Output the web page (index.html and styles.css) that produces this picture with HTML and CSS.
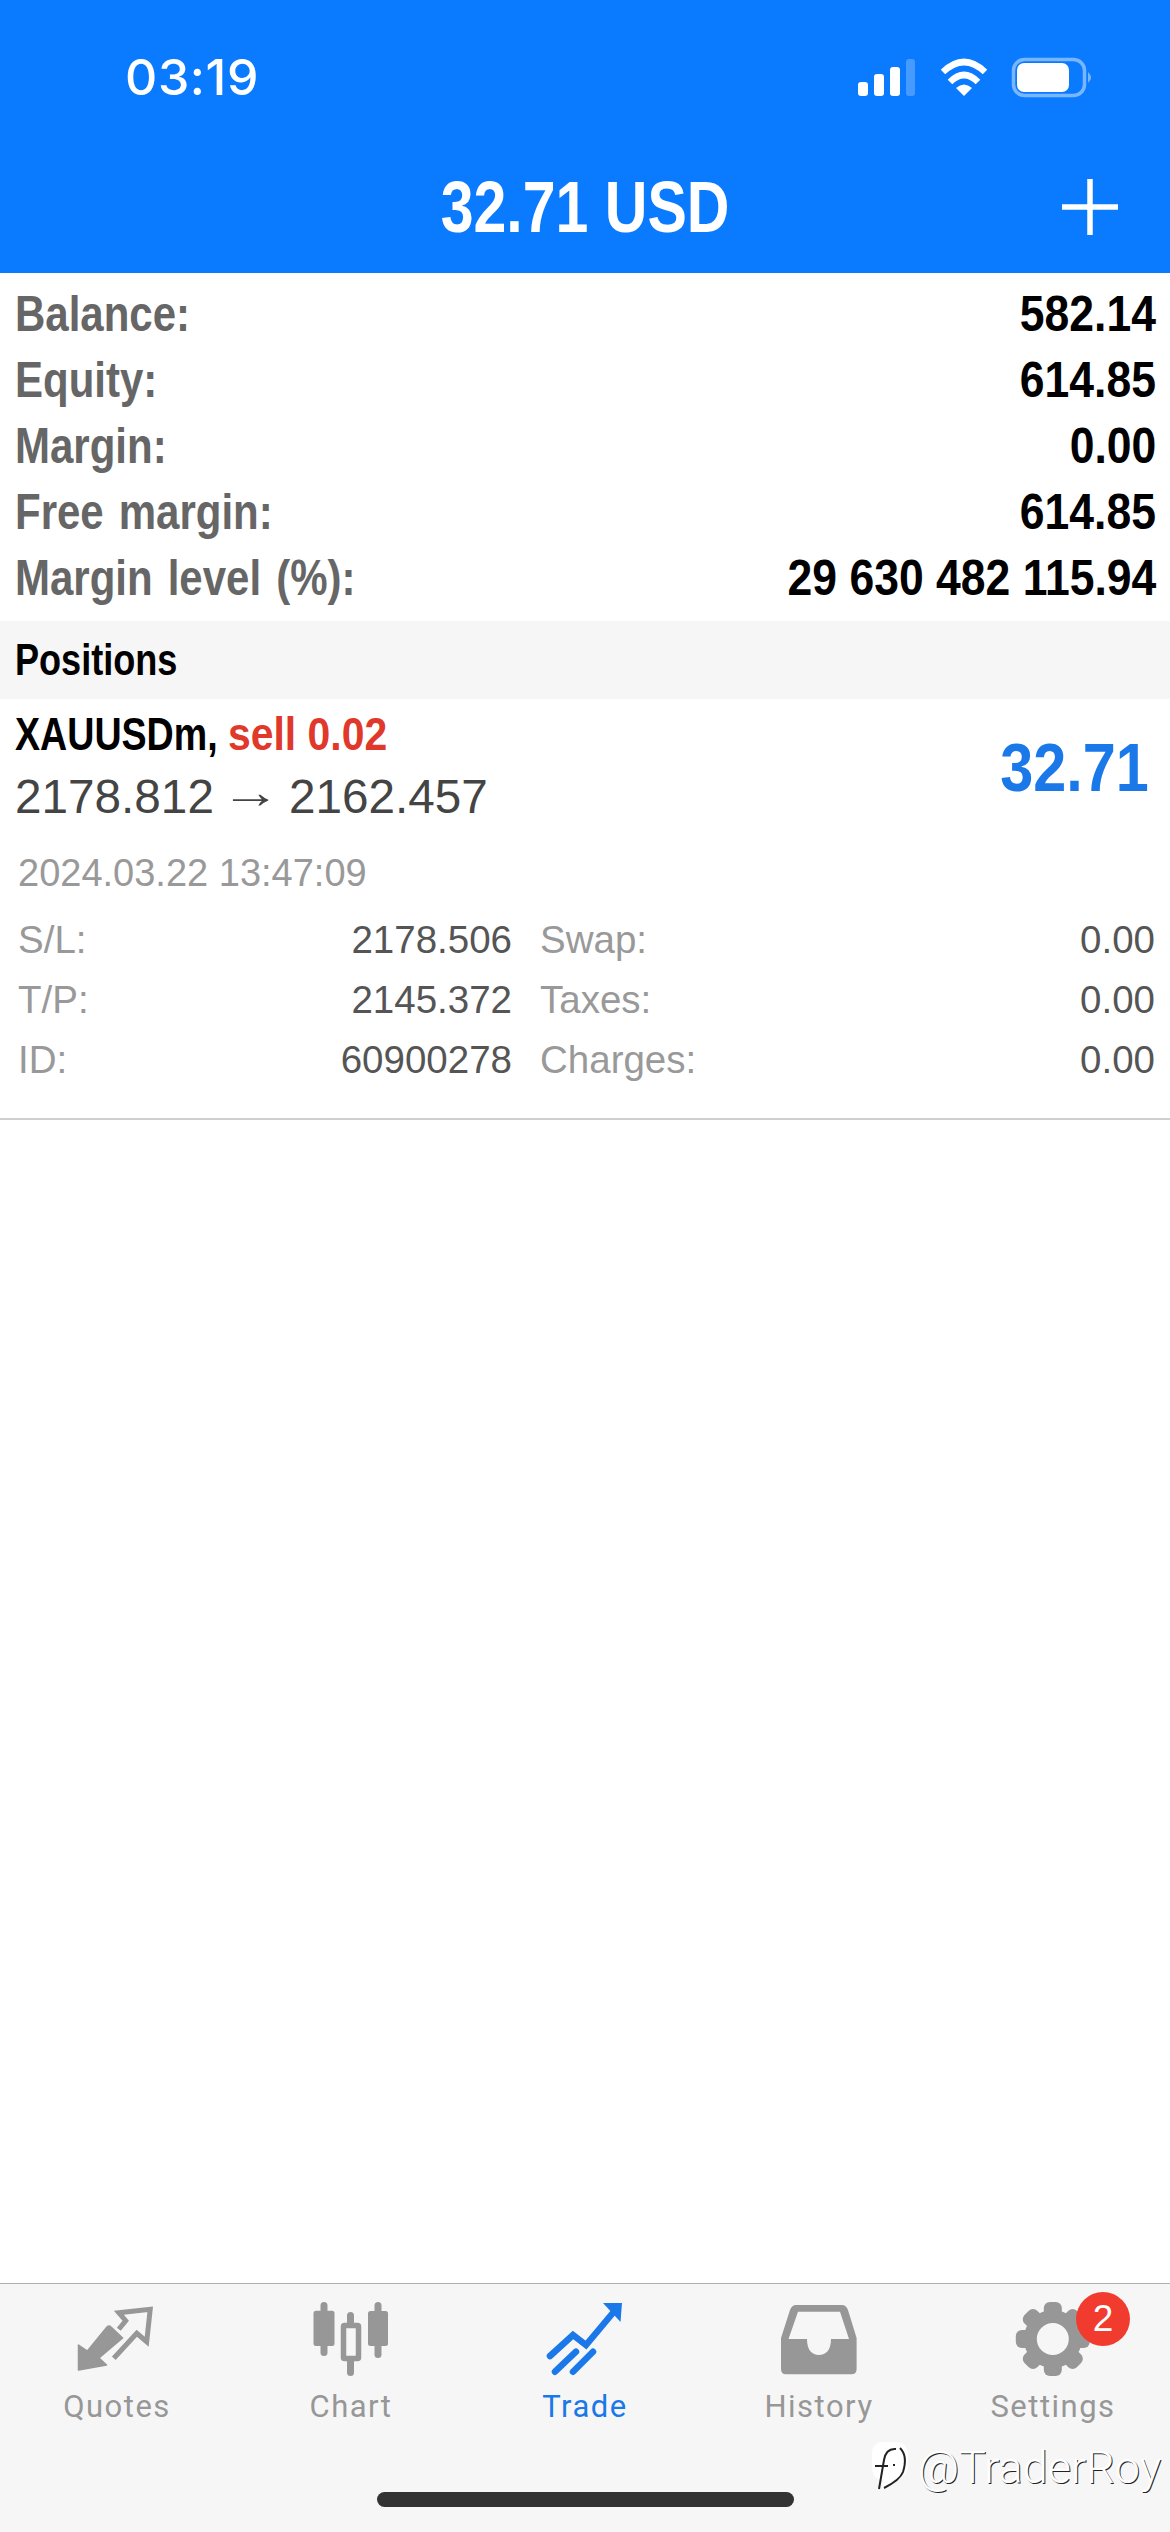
FILE: index.html
```html
<!DOCTYPE html>
<html lang="en">
<head>
<meta charset="utf-8">
<title>Trade</title>
<link rel="stylesheet" href="styles.css">
</head>
<body>
<header class="header">
  <div class="status">
    <span class="time">03:19</span>
    <svg class="status-icons" viewBox="850 50 250 56" aria-hidden="true">
      <rect x="856" y="82" width="10" height="14" rx="3" fill="#fff"/>
      <rect x="872" y="74" width="10" height="22" rx="3" fill="#fff"/>
      <rect x="888" y="67" width="10" height="29" rx="3" fill="#fff"/>
      <rect x="904" y="59" width="9" height="37" rx="3" fill="#fff" opacity=".25"/>
      <g fill="none" stroke="#fff" stroke-width="6.500">
        <path d="M941 72 Q962 52 983 72"/>
        <path d="M948 82 Q962 68 976 82"/>
      </g>
      <path d="M954 88 Q962 81 970 88 L962 96Z" fill="#fff"/>
      <rect x="1011.500" y="59.500" width="71" height="36" rx="11" fill="none" stroke="#fff" stroke-opacity=".45" stroke-width="3.500"/>
      <rect x="1015" y="63" width="52" height="29" rx="7" fill="#fff"/>
      <path d="M1086 72 Q1092 77.500 1086 83Z" fill="#fff" opacity=".45"/>
    </svg>
  </div>
  <div class="title-row">
    <h1 class="title"><span class="fit-title">32.71 USD</span></h1>
    <svg class="plus" viewBox="0 0 56 56" aria-hidden="true">
      <path d="M28 0V56M0 28H56" stroke="#fff" stroke-width="5.500" fill="none"/>
    </svg>
  </div>
</header>

<main class="main">
  <section class="summary">
    <div class="summary-row"><span class="fit-label">Balance:</span><span class="fit-value">582.14</span></div>
    <div class="summary-row"><span class="fit-label">Equity:</span><span class="fit-value">614.85</span></div>
    <div class="summary-row"><span class="fit-label">Margin:</span><span class="fit-value">0.00</span></div>
    <div class="summary-row"><span class="fit-label">Free margin:</span><span class="fit-value">614.85</span></div>
    <div class="summary-row"><span class="fit-label">Margin level (%):</span><span class="fit-value">29 630 482 115.94</span></div>
  </section>

  <h2 class="section-head"><span class="fit-head">Positions</span></h2>

  <article class="position">
    <div class="position-top">
      <div>
        <div class="symbol"><span class="fit-symbol">XAUUSDm,</span><span class="fit-side">sell 0.02</span></div>
        <div class="prices"><span>2178.812</span> <span class="arrow">→</span> <span>2162.457</span></div>
      </div>
      <div class="profit"><span class="fit-profit">32.71</span></div>
    </div>
    <div class="date">2024.03.22 13:47:09</div>
    <div class="details">
      <div class="pair"><span class="key">S/L:</span><span class="val">2178.506</span></div>
      <div class="pair"><span class="key">Swap:</span><span class="val">0.00</span></div>
      <div class="pair"><span class="key">T/P:</span><span class="val">2145.372</span></div>
      <div class="pair"><span class="key">Taxes:</span><span class="val">0.00</span></div>
      <div class="pair"><span class="key">ID:</span><span class="val">60900278</span></div>
      <div class="pair"><span class="key">Charges:</span><span class="val">0.00</span></div>
    </div>
  </article>
</main>

<footer class="tabbar">
  <nav class="tabs">
    <div class="tab">
      <svg class="tab-icon" viewBox="72 2298 90 80" aria-hidden="true">
        <path d="M78.500 2370V2345L87.400 2351 107 2327Q109 2325 111 2327L122.600 2338 99 2358 106.500 2365Z" fill="#979797" stroke="#979797" stroke-width="1.500" stroke-linejoin="round"/>
        <path d="M118.800 2329.300 125.700 2320.700 118.800 2312.700 150.200 2309.300 146.700 2341.700 136.800 2333.300 113.800 2358.300" fill="none" stroke="#979797" stroke-width="5"/>
      </svg>
      <span class="tab-label">Quotes</span>
    </div>
    <div class="tab">
      <svg class="tab-icon" viewBox="306 2298 90 80" aria-hidden="true">
        <g fill="#979797">
          <rect x="313.500" y="2310.700" width="21" height="35.300" rx="2.500"/>
          <rect x="320.500" y="2302" width="7" height="54" rx="3.500"/>
          <rect x="368" y="2311" width="20" height="35" rx="2.500"/>
          <rect x="374.500" y="2302" width="7" height="56" rx="3.500"/>
          <rect x="347" y="2312" width="7" height="64" rx="3.500"/>
        </g>
        <rect x="343.500" y="2325.500" width="15" height="33" rx="1" fill="#f6f6f6" stroke="#979797" stroke-width="5.500"/>
      </svg>
      <span class="tab-label">Chart</span>
    </div>
    <div class="tab tab-active">
      <svg class="tab-icon" viewBox="540 2298 90 80" aria-hidden="true">
        <g fill="none" stroke="#1a78e8" stroke-width="6.500" stroke-linecap="round">
          <path d="M550 2356 573 2335 586 2345 617 2308"/>
          <path d="M555 2371.700 576 2351.700"/>
          <path d="M573 2371.700 593 2351.700"/>
        </g>
        <path d="M603 2303H622L620.500 2322Z" fill="#1a78e8"/>
      </svg>
      <span class="tab-label">Trade</span>
    </div>
    <div class="tab">
      <svg class="tab-icon" viewBox="774 2298 90 80" aria-hidden="true">
        <path fill="#979797" fill-rule="evenodd" d="M796 2305H842Q846 2305 848 2310L856.600 2338V2369Q856.600 2374.300 851.600 2374.300H786Q781 2374.300 781 2369V2338L790 2310Q792 2305 796 2305ZM798 2311.700 788.500 2339H807C807 2350 812 2355 819 2355 826 2355 831 2350 831 2339H849L840 2311.700Z"/>
      </svg>
      <span class="tab-label">History</span>
    </div>
    <div class="tab">
      <svg class="tab-icon" viewBox="1008 2298 90 80" aria-hidden="true">
        <g transform="translate(1052.800 2339)" fill="#979797">
          <circle r="29"/>
          <rect x="-9" y="-37" width="18" height="74" rx="6"/>
          <rect x="-9" y="-37" width="18" height="74" rx="6" transform="rotate(45)"/>
          <rect x="-9" y="-37" width="18" height="74" rx="6" transform="rotate(90)"/>
          <rect x="-9" y="-37" width="18" height="74" rx="6" transform="rotate(135)"/>
          <circle r="16" fill="#f6f6f6"/>
        </g>
      </svg>
      <span class="tab-label">Settings</span>
    </div>
  </nav>
  <div class="home-bar"></div>
  <span class="badge">2</span>
  <div class="watermark">
    <svg class="wm-logo" viewBox="0 0 40 52" aria-hidden="true">
      <path d="M14 0H26Q38 0 38 14V24Q38 35 24 38L12 47 13 38H10Q2 36 2 24V12Q2 0 14 0Z" fill="#fff"/>
      <path d="M26 7Q16 6 14 18L9 47M5 24H18M24 22V24M30 6Q38 14 33 30 30 38 14 46" fill="none" stroke="#222" stroke-width="2"/>
    </svg>
    <span class="wm-text">@TraderRoy</span>
  </div>
</footer>
</body>
</html>
```

FILE: styles.css
```css
* { box-sizing: border-box; }

html, body { margin: 0; padding: 0; }

body {
  width: 1170px;
  height: 2532px;
  display: flex;
  flex-direction: column;
  background: #fff;
  font-family: "Liberation Sans", Arial, sans-serif;
  overflow: hidden;
}

/* Header */
.header {
  height: 273px;
  flex: none;
  background: #0a7aff;
  color: #fff;
}

.status {
  height: 150px;
  display: flex;
  justify-content: space-between;
  align-items: flex-start;
  padding: 50px 68px 0 125px;
}

.time {
  font-family: Inter, "Liberation Sans", sans-serif;
  font-weight: 500;
  font-size: 50px;
  line-height: 54px;
  letter-spacing: .6px;
}

.status-icons {
  width: 250px;
  height: 56px;
}

.title-row {
  position: relative;
  height: 123px;
  display: flex;
  justify-content: center;
}

.title {
  margin: 0;
  font-size: 72px;
  font-weight: 700;
  line-height: 80px;
  padding-top: 17px;
}

.fit-title {
  display: inline-block;
  transform: scaleX(.82);
  transform-origin: center;
  white-space: nowrap;
}

.plus {
  position: absolute;
  left: 1062px;
  top: 29px;
  width: 56px;
  height: 56px;
}

/* Main */
.main {
  flex: 1;
  min-height: 0;
}

.summary {
  padding: 7.500px 14px 10.500px 15px;
}

.summary-row {
  display: flex;
  justify-content: space-between;
  height: 66px;
  font-size: 50px;
  font-weight: 700;
  line-height: 66px;
}

.fit-label {
  display: inline-block;
  color: #666;
  white-space: nowrap;
  word-spacing: 4px;
  transform: scaleX(.84);
  transform-origin: left;
}

.fit-value {
  display: inline-block;
  color: #000;
  white-space: pre;
  transform: scaleX(.89);
  transform-origin: right;
}

.section-head {
  height: 78px;
  margin: 0;
  padding: 0 15px;
  background: #f6f6f6;
  color: #000;
  font-size: 44px;
  font-weight: 700;
  line-height: 77px;
}

.fit-head {
  display: inline-block;
  transform: scaleX(.82);
  transform-origin: left;
}

.position {
  padding: 10px 16px 28px 15px;
  border-bottom: 2px solid #cfcfcf;
}

.position-top {
  display: flex;
  justify-content: space-between;
  align-items: flex-start;
  padding-right: 5px;
}

.symbol {
  display: flex;
  font-size: 47px;
  font-weight: 700;
  line-height: 50px;
  color: #000;
}

.fit-symbol {
  display: block;
  width: 213px;
  white-space: pre;
  transform: scaleX(.8);
  transform-origin: left;
}

.fit-side {
  display: block;
  white-space: pre;
  color: #e0392b;
  transform: scaleX(.87);
  transform-origin: left;
}

.prices {
  display: flex;
  align-items: baseline;
  gap: 13.500px;
  font-size: 47.700px;
  line-height: 76px;
  color: #444;
}

.arrow {
  display: block;
  width: 48px;
  font-size: 46px;
  line-height: 40px;
  text-align: center;
  transform: translateY(-5px) scaleX(1.3);
}

.profit {
  margin-top: 19px;
  font-size: 69px;
  font-weight: 700;
  line-height: 80px;
  color: #1a78e8;
}

.fit-profit {
  display: inline-block;
  transform: scaleX(.86);
  transform-origin: right;
}

.date {
  margin-top: 12.500px;
  padding-left: 3px;
  font-size: 38px;
  line-height: 50px;
  color: #999;
}

.details {
  margin-top: 12.600px;
  padding-left: 3px;
  display: grid;
  grid-template-columns: 494px 615px;
  column-gap: 28px;
  font-size: 38.500px;
  line-height: 60px;
}

.pair {
  display: flex;
  justify-content: space-between;
}

.key { color: #999; }
.val { color: #555; }

/* Tab bar */
.tabbar {
  position: relative;
  height: 249px;
  flex: none;
  background: #f6f6f6;
  border-top: 1px solid #b0b0b0;
}

.tabs {
  display: grid;
  grid-template-columns: repeat(5, 234px);
  padding-top: 14px;
}

.tab {
  display: flex;
  flex-direction: column;
  align-items: center;
  color: #979797;
}

.tab-active { color: #1a78e8; }

.tab-icon {
  width: 90px;
  height: 80px;
}

.tab-label {
  margin-top: 9px;
  font-family: Roboto, "Liberation Sans", sans-serif;
  font-size: 31px;
  font-weight: 400;
  line-height: 40px;
  letter-spacing: 1.500px;
}

.home-bar {
  width: 417px;
  height: 15px;
  margin: 65px 0 0 377px;
  border-radius: 8px;
  background: #333;
}

.badge {
  position: absolute;
  left: 1076px;
  top: 8px;
  width: 54px;
  height: 54px;
  border-radius: 50%;
  background: #f23b2f;
  color: #fff;
  font-family: "Liberation Sans", sans-serif;
  font-size: 37px;
  line-height: 54px;
  text-align: center;
}

.watermark {
  position: absolute;
  left: 870px;
  top: 158px;
  display: flex;
  align-items: center;
  gap: 8px;
}

.wm-logo {
  width: 40px;
  height: 52px;
}

.wm-text {
  font-family: Roboto, sans-serif;
  font-weight: 300;
  font-size: 45px;
  line-height: 50px;
  color: #fff;
  text-shadow: 1px 1px 0 #222;
}
```
